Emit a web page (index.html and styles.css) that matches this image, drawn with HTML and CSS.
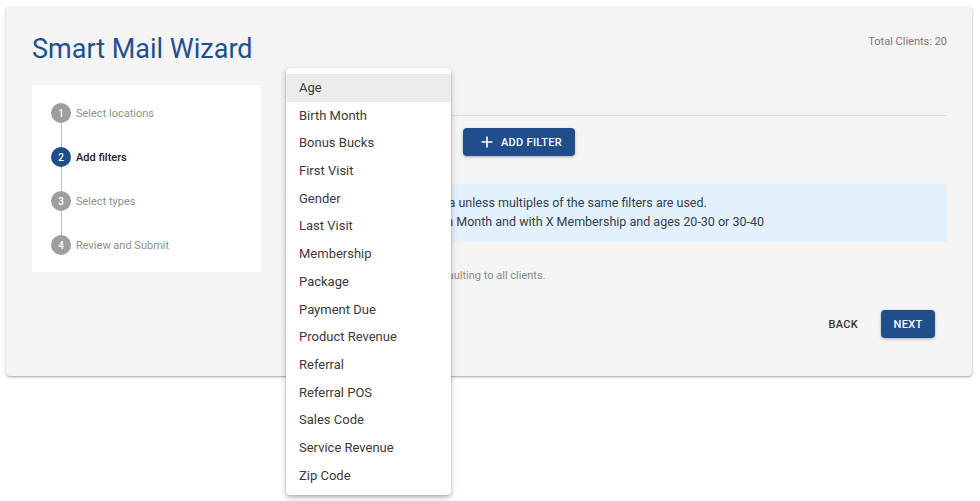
FILE: index.html
```html
<!DOCTYPE html>
<html>
<head>
<meta charset="utf-8">
<link rel="stylesheet" href="styles.css">
</head>
<body>
<div class="card">
  <div class="card-head">
    <h1 class="title">Smart Mail Wizard</h1>
    <div class="total">Total Clients: 20</div>
  </div>
  <div class="layout">
    <div class="stepper">
      <div class="step"><span class="dot">1</span><span class="label">Select locations</span></div>
      <div class="connector"></div>
      <div class="step active"><span class="dot">2</span><span class="label">Add filters</span></div>
      <div class="connector"></div>
      <div class="step"><span class="dot">3</span><span class="label">Select types</span></div>
      <div class="connector"></div>
      <div class="step"><span class="dot">4</span><span class="label">Review and Submit</span></div>
    </div>
    <div class="content">
      <div class="section-head"></div>
      <div class="filter-row">
        <div class="select-field"></div>
        <button class="btn btn-primary btn-add">
          <svg class="plus" width="12" height="12" viewBox="0 0 12 12"><path d="M6 0.5V11.5M0.5 6H11.5" stroke="#fff" stroke-width="1.6" fill="none"/></svg>
          <span>ADD FILTER</span>
        </button>
      </div>
      <div class="info">
        <div>Filters act as AND criteria unless multiples of the same filters are used.</div>
        <div>E.g. clients with any Birth Month and with X Membership and ages 20-30 or 30-40</div>
      </div>
      <div class="note">No filters have been selected, defaulting to all clients.</div>
      <div class="actions">
        <button class="btn btn-text">BACK</button>
        <button class="btn btn-primary btn-next">NEXT</button>
      </div>
    </div>
  </div>
</div>
<ul class="menu">
  <li class="menu-item selected">Age</li>
  <li class="menu-item">Birth Month</li>
  <li class="menu-item">Bonus Bucks</li>
  <li class="menu-item">First Visit</li>
  <li class="menu-item">Gender</li>
  <li class="menu-item">Last Visit</li>
  <li class="menu-item">Membership</li>
  <li class="menu-item">Package</li>
  <li class="menu-item">Payment Due</li>
  <li class="menu-item">Product Revenue</li>
  <li class="menu-item">Referral</li>
  <li class="menu-item">Referral POS</li>
  <li class="menu-item">Sales Code</li>
  <li class="menu-item">Service Revenue</li>
  <li class="menu-item">Zip Code</li>
</ul>
</body>
</html>
```
FILE: styles.css
```css
* { box-sizing: border-box; }
html, body { margin: 0; padding: 0; background: #fff; }
body {
  font-family: Roboto, "Liberation Sans", Arial, sans-serif;
  padding: 7px 8px 0 6px;
  width: 980px;
  height: 501px;
  overflow: hidden;
  position: relative;
}
.card {
  background: #f4f4f4;
  border-radius: 4px;
  box-shadow: 0 1px 3px rgba(0,0,0,0.28), 0 1px 1px rgba(0,0,0,0.12);
  height: 369px;
  padding: 26px 25px 0 26px;
}
.card-head {
  display: flex;
  justify-content: space-between;
  align-items: flex-start;
}
.title {
  margin: 0;
  font-size: 27px;
  line-height: 32px;
  font-weight: 400;
  color: #22508f;
}
.total {
  margin-top: 1px;
  font-size: 11px;
  line-height: 16px;
  color: #7a7a7a;
}
.layout {
  display: grid;
  grid-template-columns: 229px 1fr;
  column-gap: 25px;
  margin-top: 20px;
}
.stepper {
  align-self: start;
  background: #fff;
  height: 187px;
  padding: 18px 19px 0 19px;
}
.step {
  display: flex;
  align-items: center;
  height: 20px;
}
.dot {
  width: 20px;
  height: 20px;
  border-radius: 50%;
  background: #9e9e9e;
  color: #fff;
  font-size: 10px;
  font-weight: 500;
  display: flex;
  align-items: center;
  justify-content: center;
  flex: none;
}
.label {
  margin-left: 5px;
  font-size: 11px;
  color: #8f8f8f;
}
.step.active .dot { background: #1f4e8a; }
.step.active .label { color: #222; font-weight: 500; }
.connector {
  width: 1px;
  height: 24px;
  margin-left: 10px;
  background: #bdbdbd;
}
.content {
  display: flex;
  flex-direction: column;
}
.section-head {
  height: 31px;
  border-bottom: 1px solid #dcdcdc;
}
.filter-row {
  display: flex;
  align-items: center;
  gap: 12px;
  margin-top: 12px;
}
.select-field {
  width: 165px;
  height: 28px;
  border-bottom: 1px solid #999;
}
.btn {
  font-family: inherit;
  font-size: 11px;
  font-weight: 500;
  letter-spacing: 0.3px;
  border: none;
  border-radius: 4px;
  height: 28px;
  cursor: pointer;
}
.btn-primary {
  background: #1f4e8a;
  color: #fff;
  box-shadow: 0 1px 3px rgba(0,0,0,0.3);
}
.btn-add {
  width: 112px;
  display: flex;
  align-items: center;
  padding: 0 0 0 18px;
  gap: 8px;
}
.plus { flex: none; }
.info {
  margin-top: 28px;
  background: #e3f1fc;
  height: 58px;
  padding: 9px 16px 0 28px;
  font-size: 12.5px;
  line-height: 19px;
  color: #34404c;
}
.note {
  margin-top: 26px;
  font-size: 11px;
  line-height: 16px;
  color: #8a8a8a;
}
.actions {
  display: flex;
  justify-content: flex-end;
  gap: 7px;
  margin-top: 26px;
  margin-right: 12px;
}
.btn-text {
  background: transparent;
  color: #333;
  padding: 0 16px;
}
.btn-next {
  width: 54px;
  padding: 0;
}
.menu {
  position: absolute;
  left: 286px;
  top: 68px;
  width: 165px;
  margin: 0;
  padding: 6px 0;
  list-style: none;
  background: #fff;
  border-radius: 4px;
  box-shadow: 0 3px 6px rgba(0,0,0,0.22), 0 1px 3px rgba(0,0,0,0.18);
}
.menu-item {
  height: 27.7px;
  line-height: 27.7px;
  padding-left: 13px;
  font-size: 13px;
  color: #3a3a3a;
}
.menu-item.selected { background: #ebebeb; }
```
